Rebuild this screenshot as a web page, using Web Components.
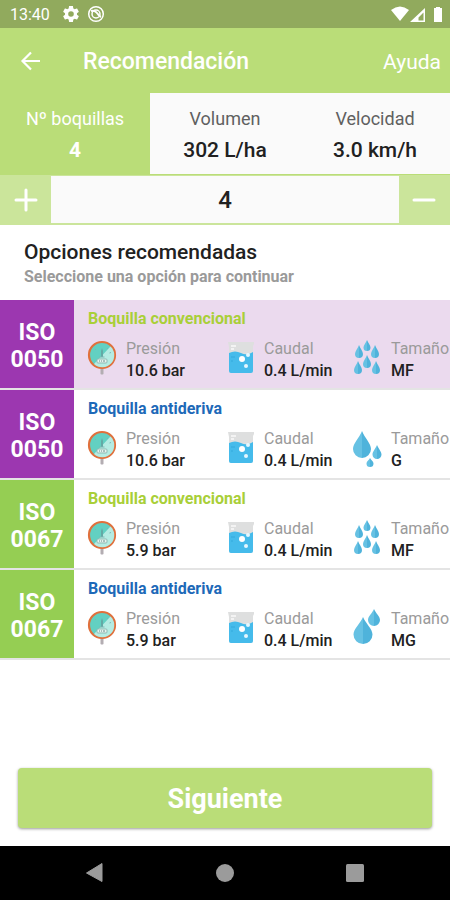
<!DOCTYPE html>
<html lang="es">
<head>
<meta charset="utf-8">
<meta name="viewport" content="width=device-width, initial-scale=1">
<title>Recomendación</title>
<style>
  html, body { margin: 0; height: 100%; }
  body {
    font-family: Roboto, "Liberation Sans", sans-serif;
    color: #212121;
    background: #fff;
    --green: #badd78;
    --green-light: #cbe59b;
  }
</style>
</head>
<body>
<spray-app></spray-app>
<script>
const define = (name, html, setup) => {
  const template = document.createElement('template');
  template.innerHTML = html;
  customElements.define(name, class extends HTMLElement {
    connectedCallback() {
      if (this.shadowRoot) return;
      this.attachShadow({ mode: 'open' }).append(template.content.cloneNode(true));
      if (setup) setup(this, this.shadowRoot);
    }
  });
};

const drop = (x, y, w, h) => {
  const r = w / 2, cy = y + h - r;
  const d = side => `M${x} ${y}C${x + side * r * 0.3} ${y + h * 0.25} ${x + side * r} ${cy - r * 0.6} ${x + side * r} ${cy}A${r} ${r} 0 0 ${side > 0 ? 1 : 0} ${x} ${y + h}Z`;
  return `<path fill="#66c1e3" d="${d(-1)}"/><path fill="#4fb3db" d="${d(1)}"/>`;
};

const icons = {
  gauge: `<path d="M12.500 29h3v6q-1.500 1-3 0z" fill="#b3adb2"/>
    <circle cx="14" cy="16" r="13" fill="#62d0c2" stroke="#e0703c" stroke-width="2.200"/>
    <path d="M22.500 7.500A12 12 0 0 1 6 25z" fill="#b5ece3"/>
    <path d="M13 12l1-3 1 3v6h-2z" fill="#65a9a5"/>
    <path d="M11.500 18h5M19 10l1-1M21.500 14l1.500-.5M8 11L7 10" stroke="#7fb5b3"/>
    <rect x="9" y="20" width="10" height="4" rx="1" fill="#e4f4ef" stroke="#8fb9b3"/>
    <path d="M11 22h1m1 0h1m1 0h2" stroke="#6b8c8c"/>`,
  beaker: `<path d="M2 3h26v2l-1 2v25q0 2-2 2H5q-2 0-2-2V8z" fill="#dedfdf"/>
    <path d="M3 14q6-3 12 0t12-1v19q0 2-2 2H5q-2 0-2-2z" fill="#45bbeb"/>
    <path d="M5 7h5M5 10h3" stroke="#fafafa" stroke-width="1.500"/>
    <path d="M5 18h4M5 22h2" stroke="#35a9dc" stroke-width="1"/>
    <circle cx="16" cy="20" r="3" fill="#fff"/><circle cx="22" cy="16" r="2" fill="#e5f7ff"/><circle cx="20" cy="27" r="2" fill="#e5f7ff"/>`,
  MF: drop(14, 1, 7, 11) + drop(6, 6, 8, 13) + drop(22, 6, 8, 13) + drop(14, 16, 8, 13) + drop(5, 22, 8, 13) + drop(23, 22, 8, 13),
  G: drop(9, 2, 18, 27) + drop(24, 16, 9, 14) + drop(17, 29, 7, 9),
  MG: drop(10, 8, 19, 27) + drop(21, 0, 12, 17)
};

define('status-bar', `<style>
  :host { display: flex; align-items: center; height: 28px; padding: 0 5px 0 10px; background: #91aa5d; color: #fff; font-size: 16px; }
  time { margin-right: 13px; } svg { display: block; } .gap { margin-left: 8px; } .right { margin-left: auto; }
</style>
<time>13:40</time>
<svg width="16" height="16" viewBox="2 2 20 20" fill="#fff"><path d="M19.430 12.980c.04-.32.07-.64.07-.98s-.03-.66-.07-.98l2.110-1.650c.19-.15.24-.42.12-.64l-2-3.460c-.12-.22-.39-.3-.61-.22l-2.490 1c-.52-.4-1.080-.73-1.690-.98l-.38-2.650C14.460 2.180 14.250 2 14 2h-4c-.25 0-.46.18-.49.42l-.38 2.650c-.61.25-1.170.59-1.690.98l-2.490-1c-.23-.09-.49 0-.61.22l-2 3.460c-.13.22-.07.49.12.64l2.110 1.650c-.04.32-.07.65-.07.98s.03.66.07.98l-2.110 1.650c-.19.15-.24.42-.12.64l2 3.460c.12.22.39.3.61.22l2.490-1c.52.4 1.080.73 1.690.98l.38 2.650c.03.24.24.42.49.42h4c.25 0 .46-.18.49-.42l.38-2.650c.61-.25 1.170-.59 1.690-.98l2.490 1c.23.09.49 0 .61-.22l2-3.460c.12-.22.07-.49-.12-.64zM12 15.500A3.500 3.500 0 1 1 12 8.500 3.500 3.500 0 0 1 12 15.500z"/></svg>
<svg class="gap" width="18" height="18" viewBox="0 0 18 18" fill="none" stroke="#fff"><circle cx="9" cy="9" r="7.300" stroke-width="1.500"/><circle cx="9" cy="9" r="4" stroke-width="1.500"/><path d="M4 6q4-1 6 2t4 4" stroke-width="2"/></svg>
<svg class="right" width="54" height="18" viewBox="0 0 54 18" fill="#fff"><path d="M0 5Q9-2 18 5L9 16z"/><path fill-rule="evenodd" d="M34 3v14H19zM32.500 7.500L27.500 12.500V15.500H32.500z"/><path d="M43 3h2V2h4v1h2v14h-8z"/></svg>`);

define('app-bar', `<style>
  :host { display: flex; align-items: center; height: 65px; padding: 2px 9px 0 18px; background: var(--green); color: #fff; box-sizing: border-box; }
  button { border: 0; padding: 0; background: none; display: flex; }
  h1 { margin: 0 auto 0 39px; font-size: 23px; font-weight: 500; }
  a { color: #fff; text-decoration: none; font-size: 21px; }
</style>
<button aria-label="Volver"><svg width="26" height="26" viewBox="0 0 26 26" fill="none" stroke="#fff" stroke-width="2.200"><path d="M22 12H5M13 3.500L4.500 12l8.500 8.500"/></svg></button>
<h1><slot></slot></h1><a href="#ayuda">Ayuda</a>`);

define('value-tab', `<style>
  :host { display: block; flex: 1; }
  button { display: flex; flex-direction: column; align-items: center; gap: 7px; width: 100%; height: 81px; padding: 14px 0 0; border: 0; border-radius: 0; background: #fafafa; color: #606060; font: 18px/24px Roboto, sans-serif; }
  strong { font-size: 21px; font-weight: 500; color: #212121; }
  :host([active]) button { background: var(--green); color: #fff; }
  :host([active]) strong { color: #fff; font-weight: 700; }
</style>
<button><slot></slot><strong><slot name="value"></slot></strong></button>`);

define('count-stepper', `<style>
  :host { display: flex; gap: 1px; padding: 1px 2px 2px; background: var(--green-light); }
  button { width: 48px; height: 47px; border: 0; padding: 0; background: var(--green-light); display: grid; place-items: center; }
  input { flex: 1; min-width: 0; box-sizing: border-box; height: 47px; padding: 0; border: 0; border-radius: 0; background: #fafafa; text-align: center; color: #212121; font: 500 24px Roboto, sans-serif; }
</style>
<button aria-label="Más"><svg width="24" height="24" stroke="#fff" stroke-width="3" stroke-linecap="round"><path d="M2 12h20M12 2v20"/></svg></button>
<input type="text" inputmode="numeric" aria-label="Nº boquillas" value="4">
<button aria-label="Menos"><svg width="24" height="24" stroke="#fff" stroke-width="3" stroke-linecap="round"><path d="M2 12h20"/></svg></button>`,
(host, root) => {
  const [plus, minus] = root.querySelectorAll('button'), input = root.querySelector('input');
  plus.onclick = () => input.value = +input.value + 1;
  minus.onclick = () => input.value = Math.max(1, input.value - 1);
});

define('metric-item', `<style>
  :host { display: flex; gap: 8px; min-width: 0; color: #9a9a9a; }
  svg { flex: none; width: 30px; height: 38px; margin-top: 1px; overflow: visible; }
  div { font-size: 16px; line-height: 22px; white-space: nowrap; }
  strong { display: block; font-weight: 500; color: #212121; }
</style>
<svg viewBox="0 0 30 38"></svg><div><slot></slot><strong><slot name="value"></slot></strong></div>`,
(host, root) => { root.querySelector('svg').innerHTML = icons[host.getAttribute('icon')]; });

define('nozzle-option', `<style>
  :host { display: block; }
  button { display: grid; grid-template-columns: 74px minmax(0, 1fr); width: 100%; height: 90px; border: 0; border-bottom: 2px solid #e4e4e4; padding: 0; background: #fff; text-align: left; color: #212121; font: 16px/22px Roboto, sans-serif; }
  .iso { display: grid; place-content: center; align-self: stretch; padding-top: 4px; text-align: center; color: #fff; font-size: 23px; font-weight: 700; line-height: 27px; background: var(--iso); }
  .body { align-self: stretch; padding: 8px 0 0 14px; min-width: 0; }
  .name { display: block; margin-bottom: 8px; font-weight: 700; color: var(--name); }
  .metrics { display: grid; grid-template-columns: 138fr 127fr 97fr; }
  :host([selected]) button { background: #ebdaee; }
</style>
<button><span class="iso">ISO<br><slot name="code"></slot></span><span class="body"><span class="name"><slot></slot></span><span class="metrics"></span></span></button>`,
(host, root) => {
  const { bar, size, kind } = host.dataset;
  host.style.setProperty('--iso', kind.startsWith('p') ? '#9c37b0' : '#95ce53');
  host.style.setProperty('--name', kind.endsWith('c') ? '#a9cf38' : '#1d69b8');
  root.querySelector('button').setAttribute('aria-pressed', host.hasAttribute('selected'));
  root.querySelector('.metrics').innerHTML =
    `<metric-item icon="gauge">Presión<span slot="value">${bar} bar</span></metric-item>
     <metric-item icon="beaker">Caudal<span slot="value">0.4 L/min</span></metric-item>
     <metric-item icon="${size}">Tamaño<span slot="value">${size}</span></metric-item>`;
});

define('action-button', `<style>
  :host { display: block; padding: 18px; }
  button { width: 100%; height: 60px; border: 0; border-radius: 4px; background: var(--green); color: #fff; box-shadow: 0 1px 3px #0006; font: 700 27px Roboto, sans-serif; padding: 2px 0 0; }
</style><button><slot></slot></button>`);

define('system-nav', `<style>
  :host { display: flex; justify-content: space-between; align-items: center; height: 54px; padding: 0 82px; background: #000; }
  button { display: flex; border: 0; padding: 2px; background: none; }
</style>
<button aria-label="Atrás"><svg width="22" height="22" fill="#9b9b9b"><path d="M18 1.500v18L2.500 11z" stroke="#9b9b9b" stroke-linejoin="round"/></svg></button>
<button aria-label="Inicio"><svg width="22" height="22" fill="#9b9b9b"><circle cx="11" cy="11" r="9"/></svg></button>
<button aria-label="Recientes"><svg width="22" height="22" fill="#9b9b9b"><rect x="2" y="2" width="18" height="18" rx="1.500"/></svg></button>`);

define('spray-app', `<style>
  :host { display: flex; flex-direction: column; min-height: 100vh; }
  nav { display: flex; border-bottom: 1px solid var(--green); }
  header { padding: 13px 24px; }
  h2 { margin: 0; font-size: 21px; line-height: 28px; font-weight: 500; }
  p { margin: 0; font-size: 16px; line-height: 21px; font-weight: 700; color: #9a9a9a; }
  action-button { margin-top: auto; }
</style>
<status-bar></status-bar>
<app-bar>Recomendación</app-bar>
<nav>
  <value-tab active>Nº boquillas<span slot="value">4</span></value-tab>
  <value-tab>Volumen<span slot="value">302 L/ha</span></value-tab>
  <value-tab>Velocidad<span slot="value">3.0 km/h</span></value-tab>
</nav>
<count-stepper></count-stepper>
<header><h2>Opciones recomendadas</h2><p>Seleccione una opción para continuar</p></header>
<main>
  <nozzle-option selected data-kind="pc" data-bar="10.6" data-size="MF">Boquilla convencional<span slot="code">0050</span></nozzle-option>
  <nozzle-option data-kind="pa" data-bar="10.6" data-size="G">Boquilla antideriva<span slot="code">0050</span></nozzle-option>
  <nozzle-option data-kind="gc" data-bar="5.9" data-size="MF">Boquilla convencional<span slot="code">0067</span></nozzle-option>
  <nozzle-option data-kind="ga" data-bar="5.9" data-size="MG">Boquilla antideriva<span slot="code">0067</span></nozzle-option>
</main>
<action-button>Siguiente</action-button>
<system-nav></system-nav>`);
</script>
</body>
</html>
